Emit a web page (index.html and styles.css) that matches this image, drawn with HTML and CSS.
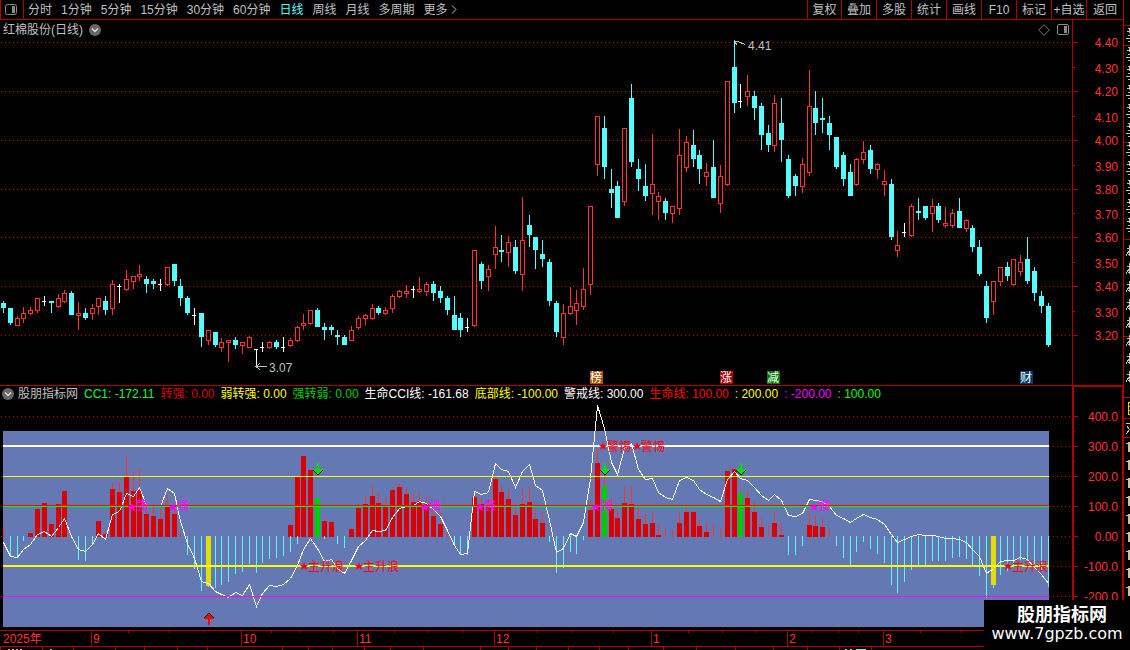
FILE: index.html
```html
<!DOCTYPE html>
<html lang="zh-CN">
<head>
    <meta charset="utf-8">
    <title>红棉股份(日线)</title>
    <link rel="stylesheet" href="styles.css">
</head>
<body>
    <div class="app">
        <main class="main">
            <nav class="toolbar">
                <button class="panel-btn" aria-label="panel">
                    <svg width="14" height="12" viewBox="0 0 14 12"><rect x="1.5" y="0.5" width="11" height="10" rx="2" fill="none" stroke="#8a8a8a"/><rect x="8" y="2" width="3" height="7" fill="#8a8a8a"/></svg>
                </button>
                <div class="periods">
                    <button>分时</button>
                    <button>1分钟</button>
                    <button>5分钟</button>
                    <button>15分钟</button>
                    <button>30分钟</button>
                    <button>60分钟</button>
                    <button class="active">日线</button>
                    <button>周线</button>
                    <button>月线</button>
                    <button>多周期</button>
                    <button>更多 <svg width="6" height="9" viewBox="0 0 6 9"><path d="M1 0.5L5 4.5L1 8.5" fill="none" stroke="#c0c0c0"/></svg></button>
                </div>
                <div class="tools">
                    <button>复权</button>
                    <button>叠加</button>
                    <button>多股</button>
                    <button>统计</button>
                    <button>画线</button>
                    <button>F10</button>
                    <button>标记</button>
                    <button>+自选</button>
                    <button>返回</button>
                </div>
            </nav>

            <section class="pane">
                <div class="plot">
                    <div class="title">
                        <span>红棉股份(日线)</span>
                        <svg class="drop" width="12" height="12" viewBox="0 0 12 12"><circle cx="6" cy="6" r="6" fill="#666"/><path d="M3 4.5L6 7.5L9 4.5" fill="none" stroke="#ddd" stroke-width="1.4"/></svg>
                        <div class="title-icons">
                            <svg width="12" height="12" viewBox="0 0 12 12"><path d="M6 0.7L11.3 6L6 11.3L0.7 6Z" fill="none" stroke="#777"/></svg>
                            <svg width="12" height="12" viewBox="0 0 12 12"><rect x="0.5" y="0.5" width="11" height="10" rx="1.5" fill="none" stroke="#8a8a8a"/><rect x="7" y="2" width="3" height="7" fill="#8a8a8a"/></svg>
                        </div>
                    </div>
                    <svg id="price" class="price-chart"></svg>
                </div>
                <svg id="priceAxis" class="axis"></svg>
            </section>

            <section class="pane indicator">
                <div class="plot">
                    <div class="legend">
                        <svg class="drop" width="12" height="12" viewBox="0 0 12 12"><circle cx="6" cy="6" r="6" fill="#666"/><path d="M3 4.5L6 7.5L9 4.5" fill="none" stroke="#ddd" stroke-width="1.4"/></svg>
                        <span class="grey">股朋指标网</span>
                        <span class="mint">CC1: -172.11</span>
                        <span class="red">转强: 0.00</span>
                        <span class="yellow">弱转强: 0.00</span>
                        <span class="green">强转弱: 0.00</span>
                        <span class="white">生命CCI线: -161.68</span>
                        <span class="yellow">底部线: -100.00</span>
                        <span class="white">警戒线: 300.00</span>
                        <span class="bright-red">生命线: 100.00</span>
                        <span class="yellow">: 200.00</span>
                        <span class="magenta">: -200.00</span>
                        <span class="lime">: 100.00</span>
                    </div>
                    <svg id="cci" class="cci-chart"></svg>
                </div>
                <svg id="cciAxis" class="axis"></svg>
            </section>

            <svg id="timeline" class="timeline"></svg>
            <svg id="tabs" class="tabs"></svg>
        </main>
        <aside class="side">
            <svg id="side" class="side-strip"></svg>
        </aside>
        <div class="watermark">
            <strong>股朋指标网</strong>
            <span>www.7gpzb.com</span>
        </div>
    </div>
    <script src="chart.js"></script>
</body>
</html>
```
FILE: styles.css
```css
body {
    margin: 0;
    background-color: #000;
    color: #c0c0c0;
    font-family: "Liberation Sans", "Noto Sans CJK SC", sans-serif;
    font-size: 12px;
    line-height: 16px;
}
button {
    margin: 0;
    padding: 0;
    border: none;
    background: none;
    color: inherit;
    font: inherit;
    white-space: nowrap;
    cursor: pointer;
}
svg {
    display: block;
    shape-rendering: crispEdges;
}
button svg, .title svg, .legend svg {
    shape-rendering: auto;
}
svg text {
    font-size: 12px;
}
.app {
    position: relative;
    display: grid;
    grid-template-columns: 1fr 6px;
    min-height: 100vh;
    overflow: hidden;
}
.main {
    min-width: 0;
}

/* toolbar */
.toolbar {
    display: flex;
    height: 19px;
    border-bottom: 1px solid #b00000;
    border-right: 1px solid #b00000;
}
.panel-btn {
    width: 24px;
    padding-left: 3px;
    border-left: 1px solid #b00000;
    border-right: 1px solid #b00000;
    box-sizing: border-box;
}
.periods {
    display: flex;
    gap: 9px;
    margin-left: 4px;
}
.periods svg {
    display: inline-block;
}
.periods .active {
    color: #54ffff;
}
.tools {
    display: grid;
    grid-template-columns: 34px repeat(7, 35px) 37px;
    margin-left: auto;
}
.tools button {
    border-left: 1px solid #b00000;
}

/* panes */
.pane {
    display: grid;
    grid-template-columns: 1fr 52px;
}
.plot {
    min-width: 0;
}
.title {
    display: flex;
    align-items: center;
    gap: 6px;
    height: 20px;
    padding: 0 3px;
    box-sizing: border-box;
}
.title-icons {
    display: flex;
    gap: 7px;
    margin-left: auto;
}
.price-chart {
    width: 100%;
    height: 345px;
}
.indicator .plot {
    border-top: 1px solid #b00000;
}
.legend {
    display: flex;
    align-items: center;
    gap: 6px;
    height: 16px;
    padding-left: 2px;
    white-space: nowrap;
    overflow: hidden;
}
.legend .drop {
    flex: none;
    margin-right: -2px;
}
.cci-chart {
    width: 100%;
    height: 228px;
}
.axis {
    width: 100%;
    height: 100%;
    box-sizing: border-box;
    border-left: 1px solid #b00000;
    border-right: 1px solid #b00000;
}
.indicator .axis {
    border: 2px solid #b00000;
    border-bottom: none;
}
.axis text, .timeline text {
    fill: #ff3232;
}
.timeline {
    width: 100%;
    height: 17px;
}
.tabs {
    width: 100%;
    height: 3px;
}
.side-strip {
    width: 100%;
    height: 100%;
}

.grey { color: #c0c0c0; }
.mint { color: #00ff40; }
.red { color: #d80000; }
.bright-red { color: #ff0000; }
.yellow { color: #ffff00; }
.green { color: #00cc00; }
.white { color: #fff; }
.magenta { color: #ff00ff; }
.lime { color: #00ff00; }

.watermark {
    position: absolute;
    right: 0;
    bottom: 0;
    display: flex;
    flex-direction: column;
    align-items: center;
    width: 146px;
    height: 50px;
    padding-top: 5px;
    box-sizing: border-box;
    background-color: #000;
    color: #fff;
}
.watermark strong {
    padding-left: 10px;
    font-size: 18px;
    line-height: 20px;
}
.watermark span {
    font-family: "DejaVu Sans", sans-serif;
    font-size: 16px;
    line-height: 18px;
}
```
FILE: chart.js
```javascript
const RED = "#ff3232", CYAN = "#54ffff", LINE = "#b00000";

// one candle each: kind (r up, c down, w flat), high, body top, body bottom, low
const candles = `
c 301 303 308 313,c 308 308 323 325,r 316 318 326 326,r 307 313 319 323,r 307 310 314 315,r 298 298 311 313,w 296 301 302 306,c 301 301 303 313,
r 294 298 307 308,r 290 293 302 303,c 291 293 315 315,r 302 313 316 330,c 308 313 318 320,r 304 308 314 320,r 298 298 307 315,c 296 301 310 315,
r 280 284 309 315,w 284 286 287 303,r 270 279 290 291,r 276 276 282 289,r 265 274 277 281,c 276 279 284 293,c 279 281 284 289,w 279 284 285 291,
r 267 267 285 286,c 264 264 281 286,c 279 286 298 306,c 296 298 313 315,w 308 315 316 325,c 313 313 337 347,r 330 330 341 345,c 332 332 345 347,
r 338 342 348 352,r 340 340 343 362,c 337 340 345 349,r 342 342 346 354,r 336 337 348 348,w 349 349 350 367,w 342 347 348 352,r 341 342 348 349,
c 340 342 347 349,w 337 347 348 352,r 338 340 346 347,r 326 327 341 342,r 314 323 326 330,r 310 310 324 325,c 308 310 327 327,c 323 327 330 340,
c 325 327 330 335,c 330 335 337 345,c 335 337 345 345,r 326 330 341 341,r 316 318 328 330,r 314 315 319 325,r 304 308 319 320,c 306 308 313 315,
r 307 310 314 315,r 294 296 309 313,r 290 291 297 298,r 285 291 294 298,w 286 289 290 298,r 277 289 292 293,r 282 284 292 296,c 281 284 293 301,
c 286 291 298 303,c 296 298 310 315,c 296 315 330 330,c 313 318 330 337,w 318 327 328 332,r 250 250 326 327,c 262 264 281 289,r 265 269 277 291,
r 226 247 255 269,c 235 250 252 262,r 236 242 253 267,c 240 247 271 274,r 197 240 275 291,c 215 225 235 247,c 237 237 250 269,c 240 254 259 267,
c 259 262 301 306,c 301 303 332 337,r 304 313 338 345,r 287 306 314 315,r 290 303 311 325,r 268 289 307 310,r 206 206 285 295,r 116 116 165 176,
c 116 128 167 179,c 169 189 193 208,c 181 186 218 218,r 128 128 202 206,c 84 98 162 167,c 159 169 179 191,c 164 186 196 201,r 134 184 194 215,
r 192 196 202 220,c 198 201 213 220,r 206 206 214 223,r 129 155 209 215,r 136 142 168 172,c 130 145 159 167,c 150 155 169 184,r 163 172 177 186,
c 140 167 198 198,r 165 176 204 213,r 81 81 185 186,c 40 67 103 113,w 84 101 102 108,r 75 91 97 106,c 91 96 108 120,c 103 106 135 150,
c 125 133 145 152,r 95 103 146 152,c 98 123 140 162,c 155 159 196 198,c 174 176 186 196,r 158 164 187 193,r 70 106 173 176,c 91 108 123 135,
c 98 118 120 133,c 116 123 135 150,c 137 137 167 169,c 152 155 179 186,c 164 172 196 196,r 158 159 185 186,r 141 152 160 164,c 145 150 169 174,
r 163 164 170 179,r 170 181 185 196,c 179 184 237 240,r 231 245 251 257,w 223 232 233 237,r 204 206 236 237,c 198 211 213 220,c 206 206 218 220,
r 199 206 214 232,c 203 206 220 223,r 207 223 226 228,r 209 213 226 228,c 198 211 228 228,r 219 220 229 232,c 225 228 247 252,c 240 247 274 276,
c 281 286 318 323,r 281 281 302 315,r 267 267 282 286,c 262 267 276 281,r 259 259 285 286,r 255 262 272 276,c 237 259 281 284,c 267 271 293 301,
c 291 296 306 313,c 303 306 345 347`.trim().split(",").map(s => s.trim().split(" ").map((v, k) => k ? +v : v));

// thin stick end, 536 is the zero line
const sticks = [527,557,557,541,536,536,536,536,536,536,536,560,561,543,536,531,483,482,456,472,469,505,503,508,494,510,532,555,569,591,
587,588,585,582,574,572,564,573,563,559,558,556,552,544,536,536,536,539,536,544,548,528,503,495,486,494,497,487,483,488,
493,492,497,510,512,531,544,555,555,490,498,499,477,485,489,504,489,487,508,513,542,573,568,552,554,540,501,448,475,498,
508,487,486,507,514,513,525,529,530,513,507,511,519,522,525,528,536,536,492,490,502,518,525,512,523,555,555,546,514,516,
518,529,546,558,565,552,542,549,554,563,585,593,582,570,565,565,561,561,561,558,557,559,565,576,598,588,575,571,565,560,
564,564,570,587];

// wide bars: index -> top
const bars = {4:533,5:509,6:503,7:524,8:504,9:491,14:521,15:534,16:489,17:492,18:477,19:491,20:490,21:514,22:516,23:519,24:507,25:514,
42:525,43:477,44:456,45:470,46:498,47:521,48:522,51:529,52:508,53:504,54:496,55:503,56:506,57:490,58:487,59:494,60:502,61:501,62:504,63:516,64:524,
69:497,70:504,71:506,72:479,73:492,74:499,75:515,76:504,77:502,78:519,79:523,86:510,87:463,88:486,89:509,90:518,91:503,92:504,93:519,94:524,95:523,96:535,
99:523,100:512,101:512,102:526,103:532,106:471,107:469,108:493,109:498,110:512,111:527,113:523,114:535,118:525,119:526,120:527};
const greenBars = [46, 88, 108];
const yellowBars = {30:586,145:585};

const life = [542,556,557,549,544,534,531,536,527,518,536,549,551,544,533,539,514,511,493,496,487,505,506,506,488,493,521,543,558,581,
583,591,594,597,592,595,584,606,593,585,586,584,578,565,549,538,548,561,559,568,573,560,546,540,530,531,530,517,508,506,
505,501,503,509,516,530,545,554,553,491,494,492,463,469,471,487,471,464,485,490,520,552,548,533,536,522,478,405,428,462,
474,448,443,469,479,478,492,497,499,480,477,480,489,494,497,501,479,471,478,480,487,495,500,494,500,515,516,513,499,500,
501,506,515,518,522,518,514,517,519,524,534,542,539,536,534,535,535,536,538,538,539,542,549,556,573,568,561,560,560,557,
559,567,574,583];

const rect = (x, y, w, h, fill) => `<rect x="${x}" y="${y}" width="${w}" height="${h}" fill="${fill}"/>`;
const text = (x, y, s, fill, extra = "") => `<text x="${x}" y="${y}" fill="${fill}" ${extra}>${s}</text>`;
const dots = (x1, x2, y) => `<path d="M${x1} ${y + 0.5}H${x2}" stroke="${LINE}" stroke-dasharray="1 3"/>`;

function show(id, top, html) {
    const svg = document.getElementById(id);
    svg.setAttribute("viewBox", `0 ${top} ${svg.clientWidth} ${svg.clientHeight}`);
    svg.innerHTML = html;
}

function star(x, y, fill) {
    return `<path transform="translate(${x} ${y})" d="M0 -4L1 -1H4L2 1L3 4L0 2L-3 4L-2 1L-4 -1H-1Z" fill="${fill}" shape-rendering="auto"/>`;
}

function drawPrice(w, xAt) {
    let out = "";
    [42, 91, 140, 189, 237, 286, 335].forEach(y => out += dots(1, w, y));
    candles.forEach(([kind, high, top, bottom, low], i) => {
        const x = xAt(i);
        if (kind === "w") {
            out += rect(x, high, 1, low - high, "#fff") + rect(x - 2, top, 4, 1, "#fff");
        } else if (kind === "c") {
            out += rect(x, high, 1, low - high, CYAN) + rect(x - 2, top, 5, bottom - top, CYAN);
        } else {
            out += rect(x, high, 1, top - high, RED) + rect(x, bottom, 1, low - bottom, RED);
            out += `<rect x="${x - 1.5}" y="${top + 0.5}" width="4" height="${bottom - top - 1}" fill="#000" stroke="${RED}"/>`;
        }
    });
    const hi = xAt(107), lo = xAt(37);
    out += `<path d="M${hi} 39.5H${hi + 4}M${hi} 41.5H${hi + 4}L${hi + 11} 44.5M${hi + 1} 42L${hi + 3} 45" stroke="#c0c0c0" fill="none"/>` + text(hi + 14, 50, "4.41", "#c0c0c0");
    out += `<path d="M${lo} 366.5H${lo + 11}M${lo + 4} 363L${lo} 366.5L${lo + 4} 370" stroke="#c0c0c0" fill="none"/>` + text(lo + 13, 372, "3.07", "#c0c0c0");
    [[87, "榜", "#a85400"], [106, "涨", "#a80000"], [113, "减", "#007800"], [150, "财", "#003c70"]].forEach(([i, s, bg]) => {
        const x = xAt(i) - 7;
        out += rect(x, 371, 13, 13, bg) + text(x + 6, 382, s, "#fff", 'text-anchor="middle"');
    });
    show("price", 40, out);
}

function arrow(x, y, dir, fill) {
    return `<path transform="translate(${x} ${y}) scale(1 ${dir})" d="M-1 -6H1V0H5L0 6L-5 0H-1Z" fill="${fill}"/>` +
        `<path transform="translate(${x} ${y}) scale(1 ${dir})" d="M-5 1L0 6L5 1" fill="none" stroke="#002000"/>`;
}

function drawCci(w, xAt) {
    const end = xAt(153) + 1;
    let out = dots(1, w, 416);
    [446, 476, 506, 536, 566, 596].forEach(y => out += dots(1, w, y));
    out += rect(3, 431, end - 3, 196, "#6478b4");
    for (const i in bars) {
        out += rect(xAt(+i) - 2, bars[i], 5, 537 - bars[i], greenBars.includes(+i) ? "#00cc00" : "#d80000");
    }
    sticks.forEach((y, i) => {
        if (y < 536) {
            out += rect(xAt(i), y, 1, (bars[i] || 537) - y, RED);
        } else if (y > 536) {
            out += rect(xAt(i), 536, 1, y - 536, CYAN);
        }
    });
    for (const i in yellowBars) {
        out += rect(xAt(+i) - 2, 536, 5, yellowBars[i] - 536, "#e0e000");
    }
    out += `<polyline points="${life.map((y, i) => xAt(i) + 0.5 + "," + (y + 0.5)).join(" ")}" fill="none" stroke="#fff"/>`;
    out += rect(3, 445, end - 3, 2, "#fff");
    out += rect(3, 476, end - 3, 1, "#ffff00");
    out += rect(3, 505, end - 3, 1, "#ff0000") + rect(3, 506, end - 3, 1, "#00ff00");
    out += rect(3, 565, end - 3, 2, "#ffff00");
    out += rect(3, 596, end - 3, 1, "#ff00ff");

    // signals
    [19, 25, 62, 70, 87, 119].forEach(i => {
        out += star(xAt(i) - 1, 507, "#ff00ff") + text(xAt(i) + 3, 510, "强", "#ff00ff");
    });
    [44, 52, 147].forEach(i => {
        out += star(xAt(i) + 1, 566, "#ff0000") + text(xAt(i) + 5, 571, "主升浪", "#ff0000");
    });
    [88, 93].forEach(i => {
        out += star(xAt(i) - 1, 446, "#ff0000") + text(xAt(i) + 3, 451, "警惕", "#ff0000");
    });
    [46, 88, 108].forEach(i => out += arrow(xAt(i) + 1, 469, 1, "#00e000"));
    out += arrow(xAt(30) + 1, 619, -1, "#ff0000");
    show("cci", 402, out);
}

function drawAxes() {
    let out = "";
    [42, 67, 91, 116, 140, 165, 189, 213, 237, 262, 286, 311, 335].forEach((y, i) => {
        out += rect(0, y, i % 2 ? 2 : 5, 1, LINE);
        out += text(45, y + (i % 2 ? 6 : 5), (4.4 - i / 10).toFixed(2), RED, 'text-anchor="end"');
    });
    show("priceAxis", 20, out);

    out = "";
    ["400.0", "300.0", "200.0", "100.0", "0.00", "-100.0", "-200.0"].forEach((s, i) => {
        const y = 416 + i * 30;
        out += rect(0, y, 4, 1, LINE) + rect(0, y + 15, 1, 1, LINE) + text(44, y + 5, s, RED, 'text-anchor="end"');
    });
    show("cciAxis", 387, out);
}

function drawTimeline(w, xAt) {
    let out = rect(0, 630, w + 52, 1, LINE) + rect(0, 646, w + 52, 1, LINE) + text(3, 643, "2025年", RED);
    [[13, "9"], [35, "10"], [52, "11"], [72, "12"], [95, "1"], [115, "2"], [129, "3"]].forEach(([i, s]) => {
        const x = xAt(i) - 1;
        out += rect(x, 630, 1, 16, LINE) + text(x + 2, 643, s, RED);
    });
    [18, 24, 29, 39, 43, 48, 57, 62, 67, 78, 83, 89, 100, 105, 110, 118, 122, 125, 134, 140].forEach(i => {
        out += rect(xAt(i) + 2, 631, 1, 2, LINE);
    });
    show("timeline", 630, out);

    out = "";
    [0, 42, 73, 115, 144, 177, 207, 282, 308, 332, 364, 390, 423, 480, 508, 536, 568, 599, 628, 663, 696, 735, 773, 807, 839, 871].forEach(x => {
        out += rect(x, 0, 1, 3, LINE);
    });
    [8, 12, 16, 20, 50].forEach(x => out += rect(x, 2, 2, 1, "#c0c0c0"));
    [845, 850, 856].forEach(x => out += rect(x, 2, x === 856 ? 10 : 2, 1, CYAN));
    show("tabs", 0, out);
}

function drawSide() {
    let out = "";
    [25, 45, 142, 239, 336, 397, 418, 437].forEach(y => out += rect(0, y, 6, 1, LINE));
    // list rows, only their left edge is visible
    for (let y = 28; y < 234; y += 19) {
        out += `<path d="M4 ${y}.5H6M3 ${y + 3}.5H6M4 ${y + 7}.5H6M2 ${y + 10}.5H6M5.5 ${y}V${y + 5}M4 ${y + 13}.5H6" stroke="#c0c0c0"/>`;
    }
    for (let y = 245; y < 385; y += 18) {
        out += `<path d="M5.5 ${y}V${y + 11}M3 ${y + 3}.5H6M2 ${y + 11}L5 ${y + 6}M3 ${y + 8}L5 ${y + 10}" stroke="#c0c0c0"/>`;
    }
    out += '<path d="M6 402.5H4.5V414.5H6M4 406.5H6M4 410.5H6" fill="none" stroke="#e0e000"/>';
    out += '<path d="M2 423.5H6M2 434L6 429M3 426L5 429" fill="none" stroke="#c0c0c0"/>';
    for (let y = 442; y < 600; y += 18) {
        out += rect(4, y, 2, 10, "#c0c0c0") + rect(2, y + 1, 2, 1, "#c0c0c0");
    }
    show("side", 0, out);
}

function draw() {
    const w = document.getElementById("price").clientWidth;
    const xAt = i => Math.floor(3.4 + i * (w - 27.3) / 153);
    drawPrice(w, xAt);
    drawCci(w, xAt);
    drawAxes();
    drawTimeline(w, xAt);
    drawSide();
}

draw();
window.addEventListener("resize", draw);
```
